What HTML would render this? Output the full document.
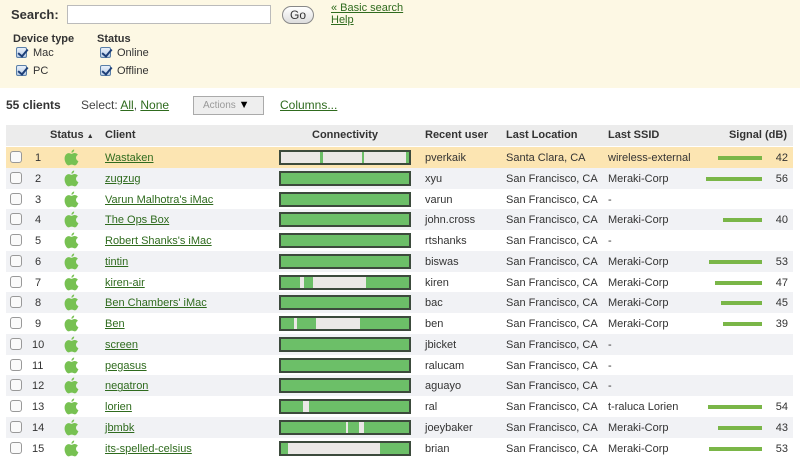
<!DOCTYPE html>
<html><head><meta charset="utf-8"><style>
*{margin:0;padding:0;box-sizing:border-box}
body{width:800px;height:450px;overflow:hidden;background:#fff;font-family:"Liberation Sans",sans-serif;font-size:11px;color:#333;position:relative}
.top{position:absolute;left:0;top:0;width:800px;height:88px;background:#fdf8e4}
.a{position:absolute;white-space:nowrap}
a{color:#2f6b1e;text-decoration:underline}
.cb{position:absolute;width:11px;height:11px;border:1px solid #5a7fa8;border-radius:2px;background:linear-gradient(#e8f0fa,#b9cde6)}
.cb:after{content:"";position:absolute;left:3px;top:-1px;width:4px;height:8px;border:solid #1d3f78;border-width:0 2px 2px 0;transform:rotate(40deg)}
.hd{position:absolute;left:6px;top:125px;width:787px;height:21px;background:#ececec;font-weight:bold}
.row{position:absolute;left:6px;width:787px;height:21px}
.row span{position:absolute;top:5px;white-space:nowrap}
.ck{position:absolute;left:4px;top:4px;width:12px;height:12px;border:1px solid #999;border-radius:3px;background:#fafafa}
.ap{position:absolute;left:58px;top:2px}
.bar{position:absolute;left:273px;top:3px;width:132px;height:15px;border:2px solid #3c4a3c;background:#6cbf68}
.sig{position:absolute;top:9px;height:4px;background:#7ab648;right:31px}
.num{right:5px}
</style></head><body>
<div class="top"></div>
<div class="a" style="left:11px;top:7px;font-size:13px;font-weight:bold">Search:</div>
<div class="a" style="left:67px;top:5px;width:204px;height:19px;border:1px solid #bbb;background:#fff"></div>
<div class="a" style="left:282px;top:6px;width:32px;height:18px;border:1px solid #888;border-radius:9px;background:linear-gradient(#fff,#ddd);font-size:12px;text-align:center;line-height:16px">Go</div>
<div class="a" style="left:331px;top:2px"><a>« Basic search</a></div>
<div class="a" style="left:331px;top:14px"><a>Help</a></div>
<div class="a" style="left:13px;top:33px;font-weight:bold">Device type</div>
<div class="a" style="left:97px;top:33px;font-weight:bold">Status</div>
<div class="cb" style="left:16px;top:47px"></div><div class="a" style="left:33px;top:47px">Mac</div>
<div class="cb" style="left:16px;top:65px"></div><div class="a" style="left:33px;top:65px">PC</div>
<div class="cb" style="left:100px;top:47px"></div><div class="a" style="left:117px;top:47px">Online</div>
<div class="cb" style="left:100px;top:65px"></div><div class="a" style="left:117px;top:65px">Offline</div>
<div class="a" style="left:6px;top:98px;font-size:12px;font-weight:bold">55 clients</div>
<div class="a" style="left:81px;top:98px;font-size:12px;color:#444">Select: <a>All</a>, <a>None</a></div>
<div class="a" style="left:193px;top:96px;width:71px;height:19px;border:1px solid #aaa;background:#eee;color:#999;font-size:10px;line-height:17px;padding-left:9px">Actions <span style="color:#000;font-size:11px">▼</span></div>
<div class="a" style="left:280px;top:98px;font-size:12px"><a>Columns...</a></div>
<div class="hd">
<span class="a" style="left:44px;top:4px">Status <span style="font-size:7px">▲</span></span>
<span class="a" style="left:99px;top:4px">Client</span>
<span class="a" style="left:306px;top:4px">Connectivity</span>
<span class="a" style="left:419px;top:4px">Recent user</span>
<span class="a" style="left:500px;top:4px">Last Location</span>
<span class="a" style="left:602px;top:4px">Last SSID</span>
<span class="a" style="right:6px;top:4px">Signal (dB)</span>
</div>
<svg width="0" height="0" style="position:absolute"><defs><symbol id="apl" viewBox="0 0 14 16"><path d="M9.5 0.5c0.2 1.4-1 3-2.5 3 -0.2-1.3 1-2.8 2.5-3z M7 4.6c0.8 0 1.8-0.8 3-0.8 0.8 0 2.2 0.3 3 1.6-2.6 1.5-2.2 5 0.5 6-0.6 1.6-1.8 4-3.3 4-1.2 0-1.5-0.7-3-0.7s-1.9 0.7-3 0.7C2.6 15.4 0.5 12 0.5 9 0.5 5.8 2.5 3.9 4.4 3.9 5.6 3.9 6.3 4.6 7 4.6z" fill="#77c152"/></symbol></defs></svg>
<div id="rows"></div>
<script>
var d=[
["Wastaken","pverkaik","Santa Clara, CA","wireless-external",42,"linear-gradient(90deg,#ebe8e6 0 39px,#6cbf68 39px 42px,#ebe8e6 42px 81px,#6cbf68 81px 83px,#ebe8e6 83px 125px,#6cbf68 125px)"],
["zugzug","xyu","San Francisco, CA","Meraki-Corp",56,""],
["Varun Malhotra's iMac","varun","San Francisco, CA","-",0,""],
["The Ops Box","john.cross","San Francisco, CA","Meraki-Corp",40,""],
["Robert Shanks's iMac","rtshanks","San Francisco, CA","-",0,""],
["tintin","biswas","San Francisco, CA","Meraki-Corp",53,""],
["kiren-air","kiren","San Francisco, CA","Meraki-Corp",47,"linear-gradient(90deg,#6cbf68 0 19px,#ebe8e6 19px 23px,#6cbf68 23px 32px,#ebe8e6 32px 85px,#6cbf68 85px)"],
["Ben Chambers' iMac","bac","San Francisco, CA","Meraki-Corp",45,""],
["Ben","ben","San Francisco, CA","Meraki-Corp",39,"linear-gradient(90deg,#6cbf68 0 13px,#ebe8e6 13px 16px,#6cbf68 16px 35px,#ebe8e6 35px 79px,#6cbf68 79px)"],
["screen","jbicket","San Francisco, CA","-",0,""],
["pegasus","ralucam","San Francisco, CA","-",0,""],
["negatron","aguayo","San Francisco, CA","-",0,""],
["lorien","ral","San Francisco, CA","t-raluca Lorien",54,"linear-gradient(90deg,#6cbf68 0 22px,#ebe8e6 22px 28px,#6cbf68 28px)"],
["jbmbk","joeybaker","San Francisco, CA","Meraki-Corp",43,"linear-gradient(90deg,#6cbf68 0 65px,#ebe8e6 65px 67px,#6cbf68 67px 78px,#ebe8e6 78px 83px,#6cbf68 83px)"],
["its-spelled-celsius","brian","San Francisco, CA","Meraki-Corp",53,"linear-gradient(90deg,#6cbf68 0 7px,#ebe8e6 7px 99px,#6cbf68 99px)"]];
var h="";
d.forEach(function(r,i){
var top=147+i*20.77;
var bg=i==0?"#fce5b2":(i%2?"#f1f2f5":"#fff");
var w={42:44,56:56,40:39,53:53,47:47,45:41,39:39,54:54,43:44}[r[4]]||0;
h+='<div class="row" style="top:'+top+'px;background:'+bg+'"><div class="ck"></div><span style="left:'+(i<9?29:26)+'px">'+(i+1)+'</span><svg class="ap" width="15" height="17"><use href="#apl"/></svg><span style="left:99px"><a>'+r[0]+'</a></span><div class="bar"'+(r[5]?' style="background:'+r[5]+'"':'')+'></div><span style="left:419px">'+r[1]+'</span><span style="left:500px">'+r[2]+'</span><span style="left:602px">'+r[3]+'</span>'+(r[4]?'<div class="sig" style="width:'+w+'px"></div><span class="num">'+r[4]+'</span>':'')+'</div>';
});
document.getElementById("rows").innerHTML=h;
</script>
</body></html>
